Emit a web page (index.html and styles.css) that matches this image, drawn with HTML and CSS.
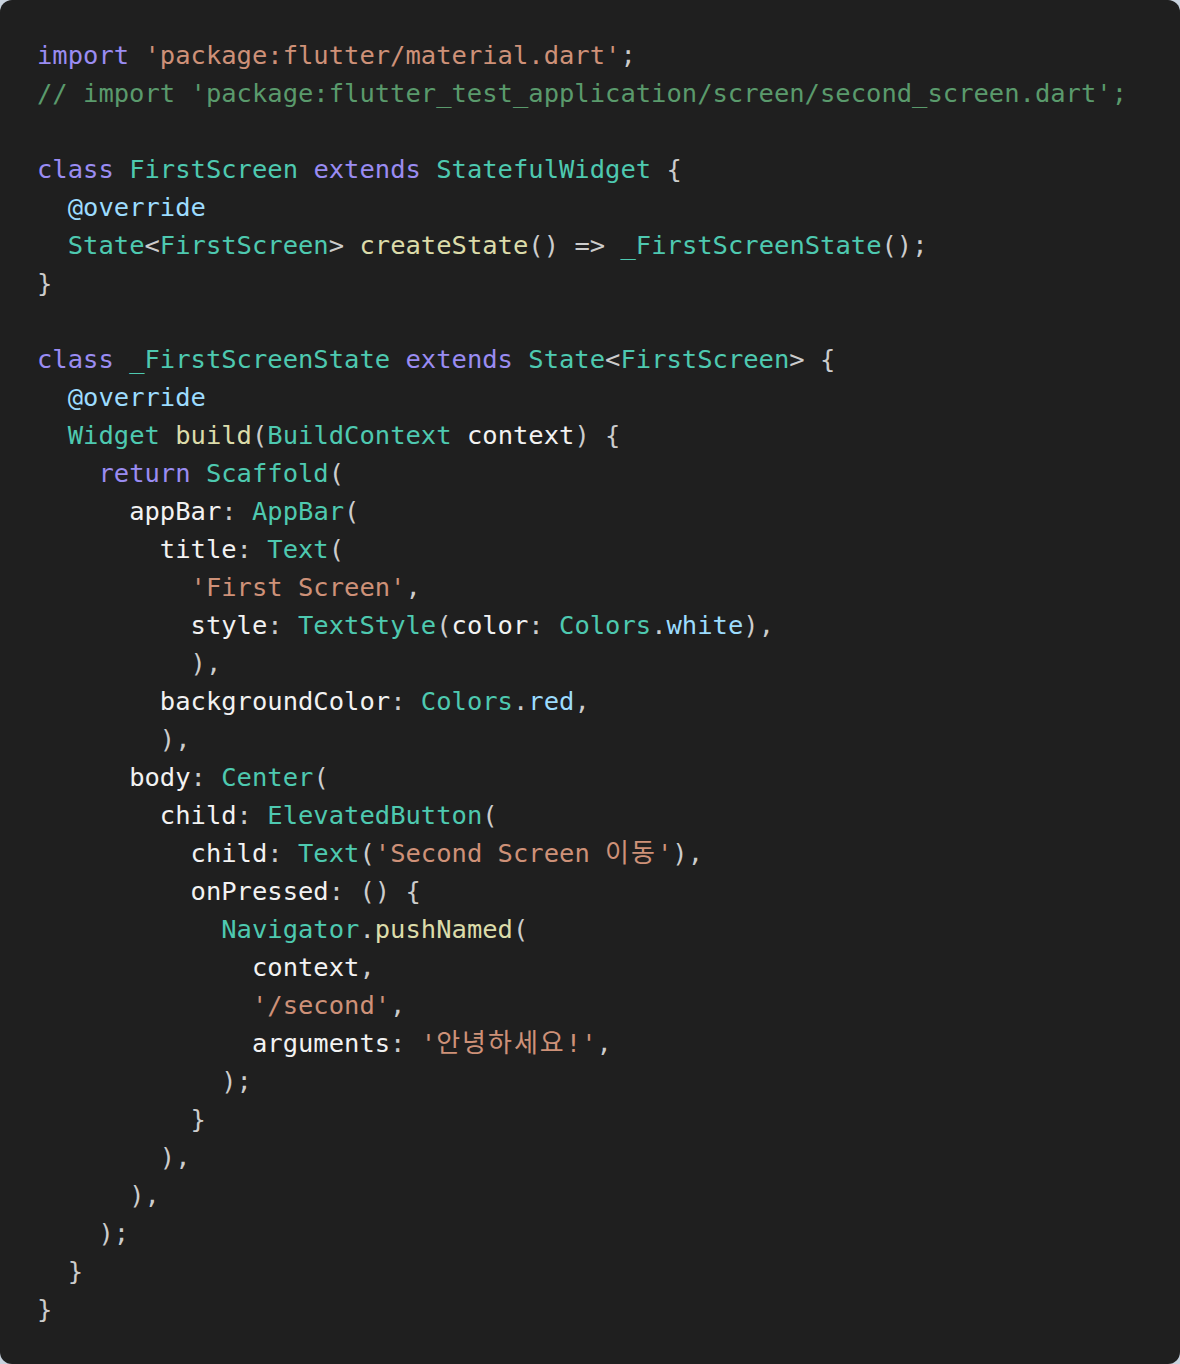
FILE: index.html
```html
<!DOCTYPE html>
<html lang="en">
<head>
<meta charset="utf-8">
<title>Code</title>
<link rel="stylesheet" href="styles.css">
</head>
<body>
<div class="card">
<pre class="code"><span class="k">import</span> <span class="s">'package:flutter/material.dart'</span><span class="p">;</span>
<span class="c">// import 'package:flutter_test_application/screen/second_screen.dart';</span>

<span class="k">class</span> <span class="t">FirstScreen</span> <span class="k">extends</span> <span class="t">StatefulWidget</span> <span class="p">{</span>
  <span class="a">@override</span>
  <span class="t">State</span><span class="p">&lt;</span><span class="t">FirstScreen</span><span class="p">&gt;</span> <span class="f">createState</span><span class="p">()</span> <span class="p">=&gt;</span> <span class="t">_FirstScreenState</span><span class="p">();</span>
<span class="p">}</span>

<span class="k">class</span> <span class="t">_FirstScreenState</span> <span class="k">extends</span> <span class="t">State</span><span class="p">&lt;</span><span class="t">FirstScreen</span><span class="p">&gt;</span> <span class="p">{</span>
  <span class="a">@override</span>
  <span class="t">Widget</span> <span class="f">build</span><span class="p">(</span><span class="t">BuildContext</span> <span class="v">context</span><span class="p">)</span> <span class="p">{</span>
    <span class="k">return</span> <span class="t">Scaffold</span><span class="p">(</span>
      <span class="v">appBar</span><span class="p">:</span> <span class="t">AppBar</span><span class="p">(</span>
        <span class="v">title</span><span class="p">:</span> <span class="t">Text</span><span class="p">(</span>
          <span class="s">'First Screen'</span><span class="p">,</span>
          <span class="v">style</span><span class="p">:</span> <span class="t">TextStyle</span><span class="p">(</span><span class="v">color</span><span class="p">:</span> <span class="t">Colors</span><span class="p">.</span><span class="a">white</span><span class="p">),</span>
          <span class="p">),</span>
        <span class="v">backgroundColor</span><span class="p">:</span> <span class="t">Colors</span><span class="p">.</span><span class="a">red</span><span class="p">,</span>
        <span class="p">),</span>
      <span class="v">body</span><span class="p">:</span> <span class="t">Center</span><span class="p">(</span>
        <span class="v">child</span><span class="p">:</span> <span class="t">ElevatedButton</span><span class="p">(</span>
          <span class="v">child</span><span class="p">:</span> <span class="t">Text</span><span class="p">(</span><span class="s">'Second Screen <span class="ko">이동</span>'</span><span class="p">),</span>
          <span class="v">onPressed</span><span class="p">:</span> <span class="p">()</span> <span class="p">{</span>
            <span class="t">Navigator</span><span class="p">.</span><span class="f">pushNamed</span><span class="p">(</span>
              <span class="v">context</span><span class="p">,</span>
              <span class="s">'/second'</span><span class="p">,</span>
              <span class="v">arguments</span><span class="p">:</span> <span class="s">'<span class="ko">안녕하세요</span>!'</span><span class="p">,</span>
            <span class="p">);</span>
          <span class="p">}</span>
        <span class="p">),</span>
      <span class="p">),</span>
    <span class="p">);</span>
  <span class="p">}</span>
<span class="p">}</span></pre>
</div>
</body>
</html>
```
FILE: styles.css
```css
html, body {
  margin: 0;
  padding: 0;
  background: #c9d3de;
}
.card {
  width: 1180px;
  height: 1364px;
  box-sizing: border-box;
  background: #1f1f1f;
  border-radius: 12px;
  padding: 36px 0 0 37px;
  overflow: hidden;
}
.code {
  margin: 0;
  font-family: "DejaVu Sans Mono", "Noto Sans CJK KR", monospace;
  font-size: 25.5px;
  line-height: 38px;
  color: #d4d4d4;
  white-space: pre;
}
.ko {
  font-family: "Noto Sans CJK KR", sans-serif;
  font-size: 26px;
  line-height: 0;
  letter-spacing: 2px;
}
.k { color: #9a8cf2; }
.s { color: #ce9178; }
.c { color: #5a9a6c; }
.t { color: #4ec9b0; }
.a { color: #9cdcfe; }
.f { color: #dcdcaa; }
.v { color: #f2f2f2; }
.p { color: #cccccc; }
```
